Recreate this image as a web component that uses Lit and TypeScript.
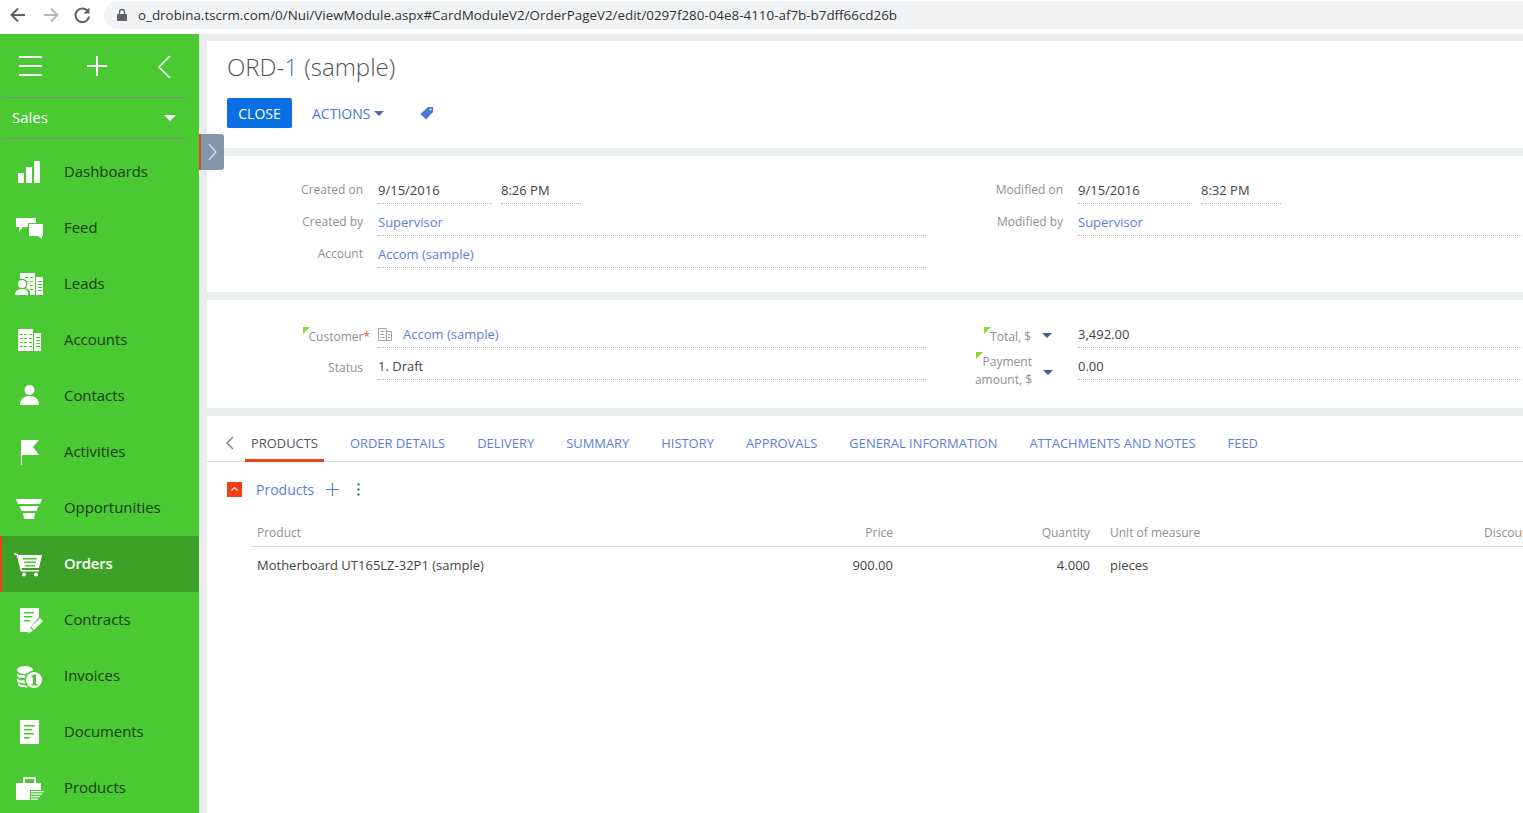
import { LitElement, html, css, svg } from "lit";
import { customElement } from "lit/decorators.js";

const G = "#4ac932";

const icons: Record<string, unknown> = {
    dashboards: svg`<path d="M3 16h6v10H3zM11 10h6v16h-6zM19 4h6v22h-6z" />`,
    feed: svg`<path d="M1 5h20v9H8l-4 5v-5H1z" /><path d="M13 10h16v14h-2l1 3-5-3H13z" fill="${G}" /><path d="M14 11h14v12h-1l0 3-4-3h-9z" />`,
    leads: svg`<path d="M5 4h15v22H5zM21 8h7v18h-7z" /><g fill="${G}"><path d="M10 8h3v1h-3zM15 8h3v1h-3zM10 12h3v1h-3zM15 12h3v1h-3zM15 16h3v1h-3zM15 20h3v1h-3zM23 12h4v1h-4zM23 15h4v1h-4zM23 18h4v1h-4zM23 21h4v1h-4z" /><circle cx="7" cy="15" r="5.5" /><path d="M-1 27v-4c1-3 5-4 8-4s8 1 8 4v4z" /></g><circle cx="7" cy="15" r="4" /><path d="M0 26v-2c1-3 4-4 7-4s6 1 6 4v2z" />`,
    accounts: svg`<path d="M3 4h15v22H3zM19 8h7v18h-7z" /><path fill="${G}" d="M5 9h3v1H5zM9 9h3v1H9zM14 9h3v1h-3zM5 13h3v1H5zM9 13h3v1H9zM14 13h3v1h-3zM5 17h3v1H5zM9 17h3v1H9zM14 17h3v1h-3zM5 21h3v1H5zM9 21h3v1H9zM14 21h3v1h-3zM21 12h4v1h-4zM21 15h4v1h-4zM21 18h4v1h-4zM21 21h4v1h-4z" />`,
    contacts: svg`<circle cx="14.5" cy="9" r="5" /><path d="M5 24c0-6 4-9 9.500-9s9.500 3 9.500 9z" />`,
    activities: svg`<path d="M6 3h1v25H6zM7 3h17l-6 7 6 8H7z" />`,
    opportunities: svg`<path d="M1 6h26l-2 5H3zM4.500 13h19l-2 5h-15zM8 20h12l-1 6h-10z" />`,
    orders: svg`<path d="M-1 4l4 1 4 16h17v1.500H5.800L1.800 6.200-1 5.500z" /><path d="M3 6h24l-3 13H6z" /><path fill="${G}" d="M8 9h14v1.500H8zM9 12.500h12V14H9zM10 16h10v1.500H10z" /><circle cx="9" cy="25.500" r="2" /><circle cx="21" cy="25.500" r="2" />`,
    contracts: svg`<path d="M5 3h19v9l-9 11-1 4H5z" /><path fill="${G}" d="M9 7h10v1.500H9zM9 11h8v1.500H9zM9 15h6v1.500H9z" /><path d="M25 13l3 3-9 9-3-3zM15.500 23l2.500 2.500-5 3z" />`,
    invoices: svg`<ellipse cx="10" cy="9" rx="8" ry="4" /><path d="M2 12c1 3 14 3 16 1v3c-3 2-14 2-16-1zM2 17c1 3 12 3 15 1v3c-3 2-14 2-15-1zM3 22c2 2 9 3 12 2v2c-4 1-11 0-12-2z" /><circle cx="19" cy="19" r="9.500" fill="${G}" /><circle cx="19" cy="19" r="8" /><path fill="${G}" d="M16.500 14.500l3-1h1.500V23h1.500v1.500h-6V23H18v-7l-1.500.5z" />`,
    documents: svg`<path d="M5 3h19v24H5z" /><path fill="${G}" d="M9 8h11v1.500H9zM9 12h8v1.500H9zM9 16h10v1.500H9zM9 20h6v1.500H9z" />`,
    products: svg`<path d="M8 4h13v6h-2V6h-9v4H8z" /><path d="M1 10h25v7H15v10H1z" /><path d="M16 18h13v9H16z" fill="${G}" /><path d="M16 18h13v1.200H16zM16 20.500h11v1.200H16zM16 23h9v1.200h-9zM16 25.500h7v1.200h-7z" />`,
};

const menu = [
    ["Dashboards", "dashboards"],
    ["Feed", "feed"],
    ["Leads", "leads"],
    ["Accounts", "accounts"],
    ["Contacts", "contacts"],
    ["Activities", "activities"],
    ["Opportunities", "opportunities"],
    ["Orders", "orders"],
    ["Contracts", "contracts"],
    ["Invoices", "invoices"],
    ["Documents", "documents"],
    ["Products", "products"],
];

const tabs = [
    "PRODUCTS",
    "ORDER DETAILS",
    "DELIVERY",
    "SUMMARY",
    "HISTORY",
    "APPROVALS",
    "GENERAL INFORMATION",
    "ATTACHMENTS AND NOTES",
    "FEED",
];

@customElement("app-root")
export class AppRoot extends LitElement {
    static styles = css`
        :host {
            display: flex;
            flex-direction: column;
            width: 1523px;
            height: 813px;
            overflow: hidden;
            font-family: "Open Sans", sans-serif;
            font-size: 13px;
            color: #444;
            background: #e9eded;
        }

        .browser {
            flex: none;
            height: 34px;
            display: flex;
            align-items: flex-start;
            background: #fff;
        }
        .nav {
            width: 104px;
            height: 30px;
            flex: none;
        }
        .address {
            flex: 1;
            height: 28px;
            margin-top: 1px;
            display: flex;
            align-items: center;
            background: #f1f3f4;
            border-radius: 14px 0 0 14px;
            padding-left: 12px;
            color: #303336;
            font-size: 13.400px;
            white-space: nowrap;
        }
        .address svg {
            margin-right: 10px;
        }

        .body {
            flex: 1;
            min-height: 0;
            display: flex;
            position: relative;
        }

        .side {
            flex: none;
            width: 199px;
            background: #4ac932;
            overflow: hidden;
        }
        .side-top {
            height: 64px;
            width: 183px;
            margin-left: 3px;
            box-sizing: border-box;
            border-bottom: 1px solid #7f8f7c;
        }
        .side-top svg {
            display: block;
        }
        .sales {
            height: 41px;
            width: 183px;
            margin-left: 3px;
            box-sizing: border-box;
            border-bottom: 1px solid #7f8f7c;
            display: flex;
            align-items: center;
            justify-content: space-between;
            padding: 0 10px 1px 9px;
            color: #fff;
            font-size: 15px;
        }
        .sales span {
            margin-bottom: 2px;
        }
        .caret-w {
            width: 0;
            height: 0;
            border-left: 6px solid transparent;
            border-right: 6px solid transparent;
            border-top: 6px solid #fff;
        }
        .menu {
            margin-top: 5px;
        }
        .item {
            height: 56px;
            display: flex;
            align-items: center;
            padding-left: 15px;
            gap: 19px;
            color: #1c3b16;
            font-size: 14.900px;
            box-sizing: border-box;
        }
        .item span {
            margin-bottom: 2px;
        }
        .item svg {
            width: 30px;
            height: 30px;
            fill: #fff;
            overflow: visible;
            flex: none;
        }
        .item.active {
            background: #3da128;
            color: #fff;
            border-left: 2px solid #f0401a;
            padding-left: 13px;
        }
        .item.active span {
            font-weight: 600;
            letter-spacing: -0.2px;
        }

        .toggle {
            position: absolute;
            left: 199px;
            top: 100px;
            width: 25px;
            height: 36px;
            box-sizing: border-box;
            background: #8497a8;
            border-left: 2px solid #f0401a;
            border-radius: 0 3px 3px 0;
        }
        .toggle svg {
            display: block;
            margin: 9px 0 0 6px;
        }

        .main {
            flex: 1;
            min-width: 0;
            padding: 7px 0 0 8px;
            display: flex;
            flex-direction: column;
            gap: 8px;
            overflow: hidden;
        }
        .card {
            flex: none;
            background: #fff;
            box-sizing: border-box;
        }

        .head {
            height: 107px;
            padding: 11px 0 0 20px;
        }
        h1 {
            margin: 0;
            height: 30px;
            font-size: 24px;
            line-height: 30px;
            font-weight: 300;
            color: #4f545b;
        }
        h1 span {
            color: #4c7bc4;
        }
        .actions {
            margin-top: 16px;
            display: flex;
            align-items: center;
            height: 30px;
        }
        .close {
            width: 65px;
            height: 30px;
            line-height: 32px;
            text-align: center;
            color: #fff;
            background: #0a6fe4;
            border-radius: 2px;
            font-size: 14px;
        }
        .act {
            margin-left: 20px;
            color: #4a78d6;
            font-size: 14px;
            display: flex;
            align-items: center;
            gap: 4px;
        }
        .caret {
            width: 0;
            height: 0;
            border-left: 5px solid transparent;
            border-right: 5px solid transparent;
            border-top: 5px solid #4a6a9e;
        }
        .tag {
            margin-left: 36px;
            display: block;
        }

        .form {
            display: grid;
            grid-template-columns: 156px 548px 122px 460px;
            column-gap: 15px;
            grid-auto-rows: 32px;
            padding-top: 19px;
        }
        .form.info {
            height: 136px;
        }
        .form.main-fields {
            height: 108px;
        }
        .lbl {
            height: 29px;
            display: flex;
            justify-content: flex-end;
            align-items: center;
            padding-top: 1px;
            box-sizing: border-box;
            color: #8e9093;
            font-size: 12px;
            text-align: right;
            line-height: 18px;
        }
        .lbl.status {
            padding-top: 5px;
        }
        .val {
            height: 29px;
            box-sizing: border-box;
            border-bottom: 1px dotted #b5b5b5;
            padding-top: 2px;
            color: #444;
            display: flex;
            align-items: center;
            white-space: nowrap;
        }
        .dt {
            display: flex;
            gap: 9px;
        }
        .dt .val {
            width: 114px;
        }
        .dt .val + .val {
            width: 80px;
        }
        a {
            color: #5b7fd8;
            text-decoration: none;
        }
        .mark {
            position: relative;
        }
        .mark::before {
            content: "";
            position: absolute;
            width: 0;
            height: 0;
            left: -6px;
            top: -1px;
            border-top: 7px solid #8fd63a;
            border-right: 7px solid transparent;
        }
        .customer {
            margin-right: -7px;
            padding-top: 7px;
        }
        .customer em {
            color: #e8502f;
            font-style: normal;
        }
        .acc-ico {
            margin-right: 11px;
        }
        .total {
            gap: 11px;
            margin-right: 11px;
        }
        .total .mark {
            position: relative;
            top: 3px;
        }
        .pay {
            height: 36px;
            gap: 11px;
            margin-right: 10px;
            margin-top: 2px;
            padding-top: 0;
        }
        .total .caret,
        .pay .caret {
            border-top-color: #3f5f98;
            margin-top: 3px;
        }
        .pay .mark::before {
            left: 1px;
        }

        .tabs-card {
            flex: 1;
            min-height: 0;
        }
        .tabs {
            height: 46px;
            box-sizing: border-box;
            border-bottom: 1px solid #dcdcdc;
            display: flex;
            align-items: center;
            padding-left: 19px;
        }
        .tabs svg {
            flex: none;
            margin-right: 11px;
            margin-top: 9px;
        }
        .tab-list {
            display: flex;
            gap: 20px;
            height: 46px;
        }
        .tab {
            padding: 0 6px;
            height: 46px;
            box-sizing: border-box;
            line-height: 55px;
            color: #5b7fd8;
            font-size: 12.930px;
            white-space: nowrap;
        }
        .tab.on {
            color: #555;
            border-bottom: 3px solid #f0401a;
        }
        .section {
            display: flex;
            align-items: center;
            height: 55px;
            padding-left: 20px;
        }
        .section svg {
            display: block;
            flex: none;
        }
        .section .prod {
            margin-left: 14px;
            color: #5b7fd8;
            font-size: 14px;
        }
        .section .add {
            margin-left: 11px;
        }
        .section .more {
            margin-left: 17px;
        }
        .table {
            margin-left: 44px;
            width: 1272px;
        }
        .tr {
            display: grid;
            grid-template-columns: 450px 192px 197px 394px 39px;
            align-items: center;
        }
        .thead {
            height: 27px;
            padding-top: 2px;
            border-bottom: 1px solid #dcdcdc;
            color: #8e9093;
            font-size: 12px;
        }
        .tbody {
            height: 35px;
        }
        .tr > :first-child {
            padding-left: 6px;
        }
        .num {
            text-align: right;
        }
        .unit {
            padding-left: 20px;
        }
        .tr > :last-child {
            white-space: nowrap;
        }
    `;

    render() {
        return html`
            ${this.renderBrowser()}
            <div class="body">
                ${this.renderSide()}
                <div class="toggle">
                    <svg width="14" height="18" viewBox="0 0 14 18" fill="none" stroke="#dfe5ea" stroke-width="1.200">
                        <path d="M2 1l7 8-7 8" />
                    </svg>
                </div>
                <div class="main">
                    ${this.renderHead()} ${this.renderInfo()} ${this.renderFields()} ${this.renderTabs()}
                </div>
            </div>
        `;
    }

    renderBrowser() {
        return html`
            <div class="browser">
                <svg class="nav" viewBox="0 0 104 30" fill="none" stroke-width="2">
                    <path d="M25 15H12M18 8.500l-6.500 6.500 6.500 6.500" stroke="#5f6368" />
                    <path d="M44 15h13M51 8.500l6.500 6.500-6.500 6.500" stroke="#b4b6b9" />
                    <path d="M88 11.500a6.800 6.800 0 1 0 1 5" stroke="#5f6368" />
                    <path d="M89.500 7.500v6h-6z" fill="#5f6368" />
                </svg>
                <div class="address">
                    <svg width="12" height="14" viewBox="0 0 12 14" fill="#5f6368">
                        <path d="M2 6h8a1 1 0 0 1 1 1v5a1 1 0 0 1-1 1H2a1 1 0 0 1-1-1V7a1 1 0 0 1 1-1z" />
                        <path d="M3.500 6V4a2.500 2.500 0 0 1 5 0v2" fill="none" stroke="#5f6368" stroke-width="1.300" />
                    </svg>
                    o_drobina.tscrm.com/0/Nui/ViewModule.aspx#CardModuleV2/OrderPageV2/edit/0297f280-04e8-4110-af7b-b7dff66cd26b
                </div>
            </div>
        `;
    }

    renderSide() {
        return html`
            <div class="side">
                <div class="side-top">
                    <svg width="183" height="62" viewBox="3 34 183 62" fill="none" stroke="#fff" stroke-width="2">
                        <path d="M19 23h23M19 32h23M19 41h23" transform="translate(0 34)" />
                        <path d="M97 56v20M87 66h20" />
                        <path d="M170 56l-11 11 11 11" stroke-width="1.500" />
                    </svg>
                </div>
                <div class="sales"><span>Sales</span><i class="caret-w"></i></div>
                <div class="menu">
                    ${menu.map(
                        ([name, icon]) => html`
                            <div class="item ${name === "Orders" ? "active" : ""}">
                                <svg viewBox="0 0 30 30">${icons[icon]}</svg>
                                <span>${name}</span>
                            </div>
                        `
                    )}
                </div>
            </div>
        `;
    }

    renderHead() {
        return html`
            <div class="card head">
                <h1>ORD-<span>1</span> (sample)</h1>
                <div class="actions">
                    <div class="close">CLOSE</div>
                    <div class="act">ACTIONS <i class="caret"></i></div>
                    <svg class="tag" width="14" height="14" viewBox="0 0 14 14" fill="#4a78d6">
                        <path d="M8 1h5v5l-7 7.500L.5 8z" />
                        <circle cx="10.500" cy="3.500" r="1" fill="#fff" />
                    </svg>
                </div>
            </div>
        `;
    }

    renderInfo() {
        return html`
            <div class="card form info">
                <div class="lbl">Created on</div>
                <div class="dt">
                    <div class="val">9/15/2016</div>
                    <div class="val">8:26 PM</div>
                </div>
                <div class="lbl">Modified on</div>
                <div class="dt">
                    <div class="val">9/15/2016</div>
                    <div class="val">8:32 PM</div>
                </div>
                <div class="lbl">Created by</div>
                <div class="val"><a>Supervisor</a></div>
                <div class="lbl">Modified by</div>
                <div class="val"><a>Supervisor</a></div>
                <div class="lbl">Account</div>
                <div class="val"><a>Accom (sample)</a></div>
            </div>
        `;
    }

    renderFields() {
        return html`
            <div class="card form main-fields">
                <div class="lbl customer">
                    <span class="mark">Customer<em>*</em></span>
                </div>
                <div class="val">
                    <svg class="acc-ico" width="14" height="14" viewBox="0 0 14 14" fill="none" stroke="#a5a5a5">
                        <path d="M.5 1.500h8v12h-8zM8.500 4.500h5v9h-5zM2.500 4.500h4M2.500 7.500h4M2.500 10.500h4M10 7.500h2M10 10.500h2" />
                    </svg>
                    <a>Accom (sample)</a>
                </div>
                <div class="lbl total">
                    <span class="mark">Total, $</span><i class="caret"></i>
                </div>
                <div class="val">3,492.00</div>
                <div class="lbl status">Status</div>
                <div class="val">1. Draft</div>
                <div class="lbl pay">
                    <span class="mark">Payment<br />amount, $</span><i class="caret"></i>
                </div>
                <div class="val">0.00</div>
            </div>
        `;
    }

    renderTabs() {
        return html`
            <div class="card tabs-card">
                <div class="tabs">
                    <svg width="8" height="14" viewBox="0 0 8 14" fill="none" stroke="#777" stroke-width="1.200">
                        <path d="M7 1L1 7l6 6" />
                    </svg>
                    <div class="tab-list">
                        ${tabs.map((t, i) => html`<div class="tab ${i === 0 ? "on" : ""}">${t}</div>`)}
                    </div>
                </div>
                <div class="section">
                    <svg width="15" height="15" viewBox="0 0 15 15">
                        <path d="M0 0h15v15H0z" fill="#f53d14" />
                        <path d="M4.500 8.500l3-3 3 3" fill="none" stroke="#fff" stroke-width="1.200" />
                    </svg>
                    <span class="prod">Products</span>
                    <svg class="add" width="15" height="15" viewBox="0 0 15 15" stroke="#5b7fd8" stroke-width="1.200">
                        <path d="M7.500 1v13M1 7.500h13" />
                    </svg>
                    <svg class="more" width="3" height="13" viewBox="0 0 3 13" fill="#4a6fb8">
                        <circle cx="1.500" cy="1.500" r="1.200" />
                        <circle cx="1.500" cy="6.500" r="1.200" />
                        <circle cx="1.500" cy="11.500" r="1.200" />
                    </svg>
                </div>
                <div class="table">
                    <div class="tr thead">
                        <div>Product</div>
                        <div class="num">Price</div>
                        <div class="num">Quantity</div>
                        <div class="unit">Unit of measure</div>
                        <div>Discount</div>
                    </div>
                    <div class="tr tbody">
                        <div>Motherboard UT165LZ-32P1 (sample)</div>
                        <div class="num">900.00</div>
                        <div class="num">4.000</div>
                        <div class="unit">pieces</div>
                        <div></div>
                    </div>
                </div>
            </div>
        `;
    }
}
